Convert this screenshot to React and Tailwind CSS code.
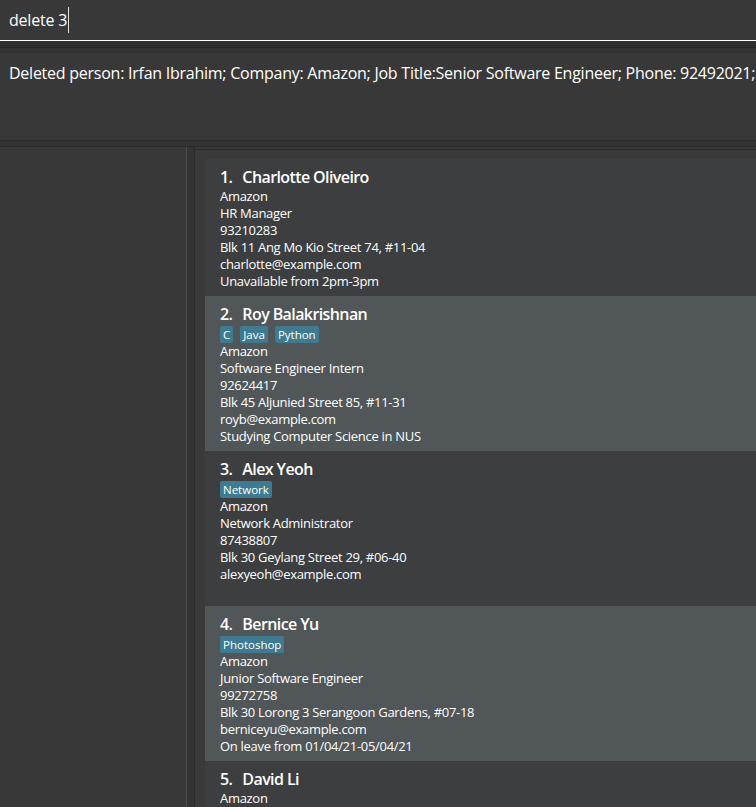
import React from 'react';

const persons = [
  {
    name: 'Charlotte Oliveiro',
    tags: [],
    company: 'Amazon',
    job: 'HR Manager',
    phone: '93210283',
    address: 'Blk 11 Ang Mo Kio Street 74, #11-04',
    email: 'charlotte@example.com',
    note: 'Unavailable from 2pm-3pm',
  },
  {
    name: 'Roy Balakrishnan',
    tags: ['C', 'Java', 'Python'],
    company: 'Amazon',
    job: 'Software Engineer Intern',
    phone: '92624417',
    address: 'Blk 45 Aljunied Street 85, #11-31',
    email: 'royb@example.com',
    note: 'Studying Computer Science in NUS',
  },
  {
    name: 'Alex Yeoh',
    tags: ['Network'],
    company: 'Amazon',
    job: 'Network Administrator',
    phone: '87438807',
    address: 'Blk 30 Geylang Street 29, #06-40',
    email: 'alexyeoh@example.com',
    note: '',
  },
  {
    name: 'Bernice Yu',
    tags: ['Photoshop'],
    company: 'Amazon',
    job: 'Junior Software Engineer',
    phone: '99272758',
    address: 'Blk 30 Lorong 3 Serangoon Gardens, #07-18',
    email: 'berniceyu@example.com',
    note: 'On leave from 01/04/21-05/04/21',
  },
  {
    name: 'David Li',
    tags: [],
    company: 'Amazon',
    job: 'Data Scientist',
    phone: '91031282',
    address: 'Blk 436 Serangoon Gardens Street 26, #16-43',
    email: 'lidavid@example.com',
    note: '',
  },
];

function PersonCard({ person, index }) {
  const bg = index % 2 === 0 ? 'bg-[#3c3e3f]' : 'bg-[#515658]';
  const lines = [person.company, person.job, person.phone, person.address, person.email, person.note];
  return (
    <div className={`${bg} pl-[15px] pt-[6px] pb-[6px] shrink-0`}>
      <div className="h-[23px] flex items-center text-[16px] font-semibold tracking-[-0.6px] text-white whitespace-nowrap">
        <span>{index + 1}.</span>
        <span className="ml-[10px]">{person.name}</span>
      </div>
      {person.tags.length > 0 && (
        <div className="h-[18px] flex items-center gap-[7px]">
          {person.tags.map(t => (
            <span key={t} className="bg-[#3e7b91] text-white text-[11.5px] leading-[17px] px-[3px] rounded-[2px]">
              {t}
            </span>
          ))}
        </div>
      )}
      {lines.map((l, i) => (
        <div key={i} className="h-[17px] leading-[17px] text-[13px] tracking-[-0.3px] text-white whitespace-nowrap">
          {l}
        </div>
      ))}
    </div>
  );
}

export default function App() {
  return (
    <div className="w-[756px] h-[807px] overflow-hidden bg-[#383838] flex flex-col font-['Open_Sans',sans-serif]">
      {/* command box */}
      <div className="h-[40px] shrink-0 flex items-center pl-[9px] text-[16px] tracking-[-0.2px] text-white">
        <span>delete 3</span>
        <span className="ml-[1px] w-px h-[26px] bg-[#e0e0e0]" />
      </div>
      <div className="h-px shrink-0 bg-white" />
      <div className="h-[6px] shrink-0 bg-[#2f2f2f]" />
      <div className="h-px shrink-0 bg-[#262626]" />
      <div className="h-[5px] shrink-0 bg-[#333333]" />

      {/* result display */}
      <div className="h-[87px] shrink-0 pl-[9px] pt-[9px] text-[16px] leading-[22px] tracking-[-0.25px] text-white whitespace-nowrap overflow-hidden">
        Deleted person: Irfan Ibrahim; Company: Amazon; Job Title:Senior Software Engineer; Phone: 92492021; Email: irfan@example.com
      </div>
      <div className="h-px shrink-0 bg-[#2a2a2a]" />
      <div className="h-[5px] shrink-0 bg-[#333333]" />
      <div className="h-px shrink-0 bg-[#2a2a2a]" />

      {/* main */}
      <div className="flex-1 flex min-h-0">
        <div className="w-[186px] shrink-0 bg-[#383838]" />
        <div className="w-px shrink-0 bg-[#4d4d4d]" />
        <div className="w-[7px] shrink-0 bg-[#333333]" />
        <div className="w-px shrink-0 bg-[#2a2a2a]" />
        <div className="flex-1 min-w-0 flex flex-col bg-[#3a3a3a]">
          <div className="h-px shrink-0 bg-[#2a2a2a] mt-[2px]" />
          <div className="flex-1 min-h-0 overflow-hidden pl-[10px] pt-[9px] flex flex-col">
            {persons.map((p, i) => (
              <PersonCard key={p.name} person={p} index={i} />
            ))}
          </div>
        </div>
      </div>
    </div>
  );
}
